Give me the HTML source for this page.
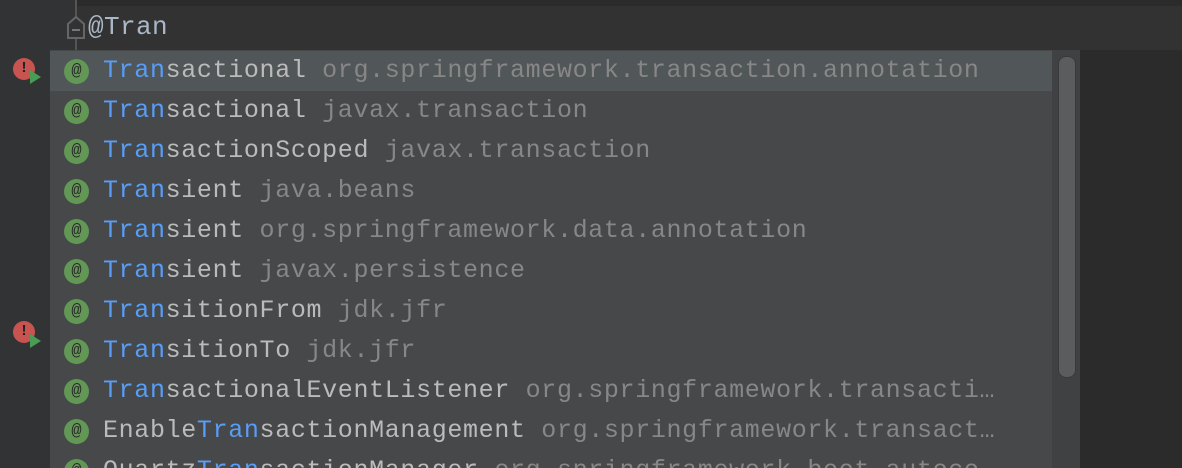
<!DOCTYPE html>
<html><head><style>
body{margin:0;width:1182px;height:468px;background:#2b2b2b;overflow:hidden;position:relative;font-family:"Liberation Mono",monospace;}
.gut{position:absolute;left:0;top:0;width:76px;height:468px;background:#313335;}
.cur{position:absolute;left:76px;top:6px;width:1106px;height:44px;background:#323232;}
.code{position:absolute;left:88px;top:12px;font-size:26px;color:#a9b7c6;letter-spacing:0.4px}
.pop{position:absolute;left:50px;top:50px;width:1030px;height:418px;background:#46484a;overflow:hidden}
.row{position:absolute;left:0;height:40px;width:1002px;font-size:25px;line-height:40px;white-space:nowrap;color:#bbbbbb;letter-spacing:0.65px}
.row.sel{background:#515658}
.ic{position:absolute;left:14px;top:8px;width:25px;height:25px;border-radius:50%;background:#629755;color:#2b2b2b;font-size:17px;line-height:25px;text-align:center;letter-spacing:0}
.t{position:absolute;left:53px;top:0}
.b{color:#589df6}.g{color:#878787}
.track{position:absolute;left:1002px;top:0;width:28px;height:418px;background:#3f4143}
.thumb{position:absolute;left:1008px;top:6px;width:16px;height:320px;border-radius:8px;background:#5a5c5e;border:1px solid #37393b}
.err{position:absolute;left:13px;width:22px;height:22px;border-radius:50%;background:#c75450;color:#222;font-weight:bold;font-size:15px;line-height:22px;text-align:center}
.play{position:absolute;width:0;height:0;border-left:11px solid #499c54;border-top:7px solid transparent;border-bottom:7px solid transparent}
</style></head><body>
<div class="gut"></div>
<div class="cur"></div>
<div style="position:absolute;left:75px;top:0;width:2px;height:18px;background:#555"></div>
<div style="position:absolute;left:75px;top:38px;width:2px;height:12px;background:#555"></div>
<svg style="position:absolute;left:67px;top:16px" width="18" height="24"><path d="M1 8 L9 1 L17 8 L17 22 L1 22 Z" fill="none" stroke="#666" stroke-width="2"/><path d="M5 14 H13" stroke="#777" stroke-width="2"/></svg>
<div class="code">@Tran</div>
<div class="err" style="top:58px">!</div><div class="play" style="left:30px;top:70px"></div>
<div class="err" style="top:321px">!</div><div class="play" style="left:30px;top:334px"></div>
<div class="pop">
<div class="row sel" style="top:1px"><div class="ic">@</div><div class="t"><span class="b">Tran</span>sactional <span class="g">org.springframework.transaction.annotation</span></div></div>
<div class="row" style="top:41px"><div class="ic">@</div><div class="t"><span class="b">Tran</span>sactional <span class="g">javax.transaction</span></div></div>
<div class="row" style="top:81px"><div class="ic">@</div><div class="t"><span class="b">Tran</span>sactionScoped <span class="g">javax.transaction</span></div></div>
<div class="row" style="top:121px"><div class="ic">@</div><div class="t"><span class="b">Tran</span>sient <span class="g">java.beans</span></div></div>
<div class="row" style="top:161px"><div class="ic">@</div><div class="t"><span class="b">Tran</span>sient <span class="g">org.springframework.data.annotation</span></div></div>
<div class="row" style="top:201px"><div class="ic">@</div><div class="t"><span class="b">Tran</span>sient <span class="g">javax.persistence</span></div></div>
<div class="row" style="top:241px"><div class="ic">@</div><div class="t"><span class="b">Tran</span>sitionFrom <span class="g">jdk.jfr</span></div></div>
<div class="row" style="top:281px"><div class="ic">@</div><div class="t"><span class="b">Tran</span>sitionTo <span class="g">jdk.jfr</span></div></div>
<div class="row" style="top:321px"><div class="ic">@</div><div class="t"><span class="b">Tran</span>sactionalEventListener <span class="g">org.springframework.transacti…</span></div></div>
<div class="row" style="top:361px"><div class="ic">@</div><div class="t">Enable<span class="b">Tran</span>sactionManagement <span class="g">org.springframework.transact…</span></div></div>
<div class="row" style="top:401px"><div class="ic">@</div><div class="t">Quartz<span class="b">Tran</span>sactionManager <span class="g">org.springframework.boot.autoco…</span></div></div>
<div class="track"></div><div class="thumb"></div>
</div>
</body></html>
